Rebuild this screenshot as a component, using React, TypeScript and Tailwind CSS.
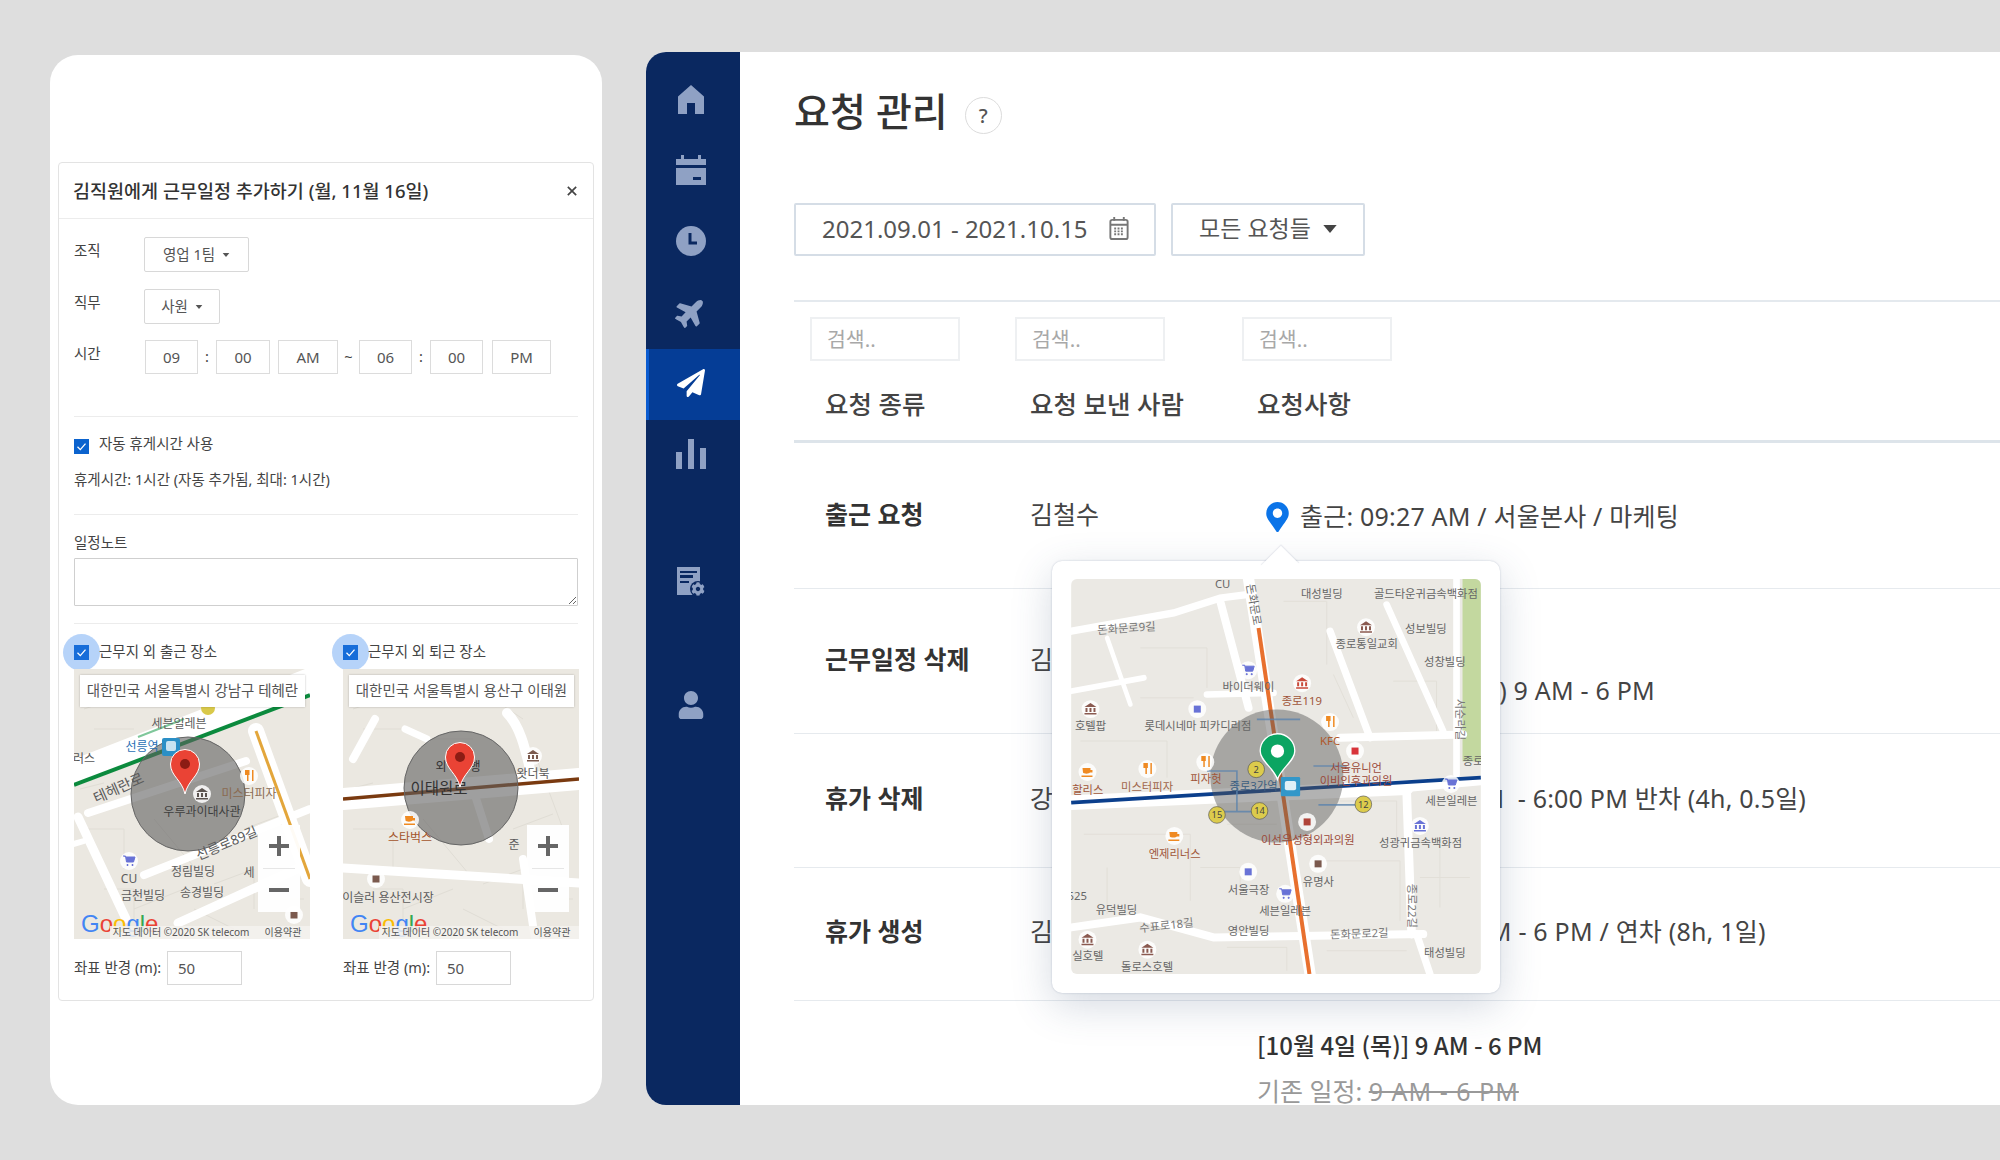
import { FaPaperPlane, FaPlane, FaUser, FaCog, FaMapMarkerAlt } from "react-icons/fa";

const FONT = { fontFamily: '"Noto Sans", "Noto Sans CJK KR", sans-serif' };
const CJK_FIRST = { fontFamily: '"Noto Sans CJK KR", "Noto Sans", sans-serif' };

function Caret({ className = "" }: { className?: string }) {
  return (
    <svg viewBox="0 0 10 6" className={className} fill="currentColor">
      <path d="M0 0h10L5 6z" />
    </svg>
  );
}

function Check() {
  return (
    <svg viewBox="0 0 15 15" className="h-[15px] w-[15px]" fill="none" stroke="white" strokeWidth="1.3">
      <path d="M3.5 7.8l2.8 2.8 5.2-6" />
    </svg>
  );
}

function Checkbox({ halo }: { halo?: boolean }) {
  return (
    <span className="relative block h-[15px] w-[15px] shrink-0 bg-[#0b63ce]">
      {halo && <span className="absolute -left-[11px] -top-[11px] h-[37px] w-[37px] rounded-full bg-[#2f80ed]/35" />}
      <span className="absolute inset-0">
        <Check />
      </span>
    </span>
  );
}

function Field({ w, value }: { w: string; value: string }) {
  return <div className={`${w} flex h-[34px] items-center justify-center border border-[#dcdcdc] text-[15px] text-[#555]`}>{value}</div>;
}

function DropButton({ w, label }: { w: string; label: string }) {
  return (
    <div className={`${w} flex h-[35px] items-center justify-center gap-[7px] rounded-[2px] border border-[#d8d8d8] text-[14.5px] text-[#555]`}>
      {label}
      <Caret className="h-[4px] w-[8px] text-[#555]" />
    </div>
  );
}

function Pin({ x, y, fill, dot, s = 1 }: { x: number; y: number; fill: string; dot: string; s?: number }) {
  return (
    <g transform={`translate(${x} ${y}) scale(${s})`}>
      <path d="M0 0C-3-14-14.5-18-14.5-30A14.5 14.5 0 0 1 14.5-30C14.5-18 3-14 0 0Z" fill={fill} stroke="#fff" strokeWidth="1" />
      <circle cx="0" cy="-30" r="5" fill={dot} />
    </g>
  );
}

function Poi({ x, y, color, kind }: { x: number; y: number; color: string; kind: "cart" | "fork" | "square" | "bank" | "cup" }) {
  return (
    <g transform={`translate(${x} ${y})`}>
      <circle r="9" fill="#fff" opacity="0.85" />
      {kind === "square" && <rect x="-3.5" y="-3.5" width="7" height="7" fill={color} />}
      {kind === "fork" && <path d="M-4-6v5h2v6h1.5v-6h1V-6M3-6v11h1.5V-6z" fill={color} />}
      {kind === "cart" && <path d="M-6-5h2.5l1 6h7l1.5-5h-9M-2 3.5h1v1h-1zM3 3.5h1v1h-1z" fill={color} stroke={color} />}
      {kind === "bank" && <path d="M-6-2L0-6l6 4zM-5-1h2v4h-2zM-1-1h2v4h-2zM3-1h2v4h-2zM-6 4h12v1.5h-12z" fill={color} />}
      {kind === "cup" && <path d="M-5-4h8v2h2v2.5h-2.6C2 2-4 2-4.5 0.5zM-6 3.5H5V5H-6z" fill={color} />}
    </g>
  );
}

const ROAD = { fill: "none", stroke: "#fff", strokeLinecap: "round" as const };

function Attribution({ x }: { x: number }) {
  return (
    <g>
      <text x="7" y="263" fontSize="24" fontFamily="Liberation Sans, sans-serif">
        <tspan fill="#4285f4">G</tspan>
        <tspan fill="#ea4335">o</tspan>
        <tspan fill="#fbbc05">o</tspan>
        <tspan fill="#4285f4">g</tspan>
        <tspan fill="#34a853">l</tspan>
        <tspan fill="#ea4335">e</tspan>
      </text>
      <rect x="36" y="257" width="200" height="13" fill="#f4f2ee" opacity="0.85" />
      <text x={x} y="267" fontSize="10" fill="#555" textAnchor="middle">지도 데이터 ©2020 SK telecom</text>
      <text x="209" y="267" fontSize="10" fill="#555" textAnchor="middle">이용약관</text>
    </g>
  );
}

function Texture() {
  return (
    <g fill="none" stroke="#e0ddd5" strokeWidth="1">
      <path d="M10 160h40v40M30 220h30v30M80 150l50 60M140 215l40-15v40M170 160l40-15M190 80l30 80M20 60h40M10 40l30-10M60 240l50-20" />
      <path d="M150 30l30 20M200 230h30M90 70h40M120 240l40 20M6 120l24-6" />
    </g>
  );
}

function LeftMap() {
  return (
    <svg viewBox="0 0 236 270" className="h-full w-full" style={FONT}>
      <rect width="236" height="270" fill="#ebe8e1" />
      <Texture />
      <g {...ROAD}>
        <path d="M0 104L236 12" strokeWidth="26" />
        <path d="M182 62L236 210" strokeWidth="16" />
        <path d="M4 148L52 250" strokeWidth="9" />
        <path d="M14 144L172 92" strokeWidth="8" />
        <path d="M70 206L236 140" strokeWidth="8" />
        <path d="M104 254L236 194" strokeWidth="9" />
        <path d="M0 175L10 172" strokeWidth="6" />
      </g>
      <path d="M0 116L236 26" stroke="#0b8a3d" strokeWidth="4" />
      <path d="M64 68L110 50" stroke="#7fc79a" strokeWidth="2" />
      <path d="M182 62L236 210" stroke="#e3a63b" strokeWidth="3" />
      <circle cx="114" cy="125" r="57" fill="#5f5f5f" fillOpacity="0.6" stroke="#666" strokeWidth="1" />
      <g fontSize="12" fill="#5b5b5b" textAnchor="middle">
        <text x="105" y="59">세븐일레븐</text>
        <text x="68" y="82" fill="#2a6fb5">선릉역</text>
        <text x="10" y="94" fill="#555">러스</text>
        <text x="45" y="124" fontSize="14.5" transform="rotate(-24 45 120)">테헤란로</text>
        <text x="128" y="147" fill="#3e3e3e">우루과이대사관</text>
        <text x="175" y="129" fill="#8a6a50">미스터피자</text>
        <text x="153" y="179" fontSize="13.5" transform="rotate(-23 153 175)">선릉로89길</text>
        <text x="119" y="207">정림빌딩</text>
        <text x="175" y="208">세</text>
        <text x="55" y="214">CU</text>
        <text x="69" y="231">금천빌딩</text>
        <text x="128" y="228">송경빌딩</text>
      </g>
      <rect x="88" y="69" width="18" height="18" rx="2" fill="#2b8fc6" />
      <rect x="92" y="72" width="10" height="10" rx="2" fill="#fff" opacity="0.75" />
      <circle cx="134" cy="39" r="7" fill="#d9c94a" />
      <Poi x={55} y={192} color="#6872d6" kind="cart" />
      <Poi x={175} y={107} color="#ef8a22" kind="fork" />
      <Poi x={128} y={125} color="#5c5450" kind="bank" />
      <Poi x={220} y={246} color="#7b5a4e" kind="square" />
      <Pin x={111} y={125} fill="#ea4335" dot="#8c1c14" s={1} />
      <Attribution x={107} />
    </svg>
  );
}

function RightMap() {
  return (
    <svg viewBox="0 0 236 270" className="h-full w-full" style={FONT}>
      <rect width="236" height="270" fill="#ebe8e1" />
      <Texture />
      <g {...ROAD}>
        <path d="M0 130L236 110" strokeWidth="22" />
        <path d="M0 199L236 214" strokeWidth="9" />
        <path d="M164 44C180 60 184 90 190 112" strokeWidth="10" />
        <path d="M180 190L192 270" strokeWidth="8" />
        <path d="M10 90L32 50" strokeWidth="8" />
        <path d="M62 60L84 70" strokeWidth="7" />
        <path d="M130 120L146 170" strokeWidth="8" />
      </g>
      <path d="M0 130L236 110" stroke="#7a3a10" strokeWidth="3.5" />
      <circle cx="118" cy="119" r="57" fill="#5f5f5f" fillOpacity="0.6" stroke="#666" strokeWidth="1" />
      <g fontSize="12" fill="#5b5b5b" textAnchor="middle">
        <text x="98" y="102" fill="#333">외</text>
        <text x="132" y="102" fill="#333">행</text>
        <text x="96" y="125" fontSize="15.5" fill="#333">이태원로</text>
        <text x="190" y="109">왓더북</text>
        <text x="67" y="173" fill="#a3542a">스타벅스</text>
        <text x="171" y="180">준</text>
        <text x="45" y="233">이슬러 용산전시장</text>
      </g>
      <Poi x={190} y={87} color="#7b5a4e" kind="bank" />
      <Poi x={67} y={151} color="#ef8a22" kind="cup" />
      <Poi x={33} y={210} color="#7b5a4e" kind="square" />
      <Pin x={117} y={118} fill="#ea4335" dot="#8c1c14" />
      <Attribution x={107} />
    </svg>
  );
}

function ZoomControl() {
  return (
    <div className="absolute bottom-[27px] right-[10px] flex h-[87px] w-[42px] flex-col items-center bg-white/95">
      <div className="flex h-[43px] w-full items-center justify-center">
        <svg viewBox="0 0 20 20" className="h-[20px] w-[20px]" fill="#666">
          <path d="M8 0h4v8h8v4h-8v8H8v-8H0V8h8z" />
        </svg>
      </div>
      <div className="h-px w-[32px] bg-[#e6e6e6]" />
      <div className="flex flex-1 items-center justify-center">
        <div className="h-[4px] w-[20px] bg-[#666]" />
      </div>
    </div>
  );
}

function MapBlock({ label, address, map }: { label: string; address: string; map: React.ReactNode }) {
  return (
    <div className="w-[236px]">
      <div className="flex h-[15px] items-center gap-[10px] text-[14.5px] text-[#444]">
        <Checkbox halo />
        <span className="relative">{label}</span>
      </div>
      <div className="relative mt-[9px] h-[270px] w-[236px]">
        {map}
        <div className="absolute left-[6px] top-[6px] flex h-[32px] w-[225px] items-center justify-center bg-white text-[14.5px] text-[#555] shadow-[0_0_2px_rgba(0,0,0,0.25)]">
          {address}
        </div>
        <ZoomControl />
      </div>
      <div className="mt-[12px] flex items-center gap-[6px] text-[14.5px] text-[#444]">
        <span className="w-[87px] shrink-0 whitespace-nowrap">좌표 반경 (m):</span>
        <div className="flex h-[34px] w-[75px] items-center border border-[#d8d8d8] pl-[10px] text-[15px] text-[#555]">50</div>
      </div>
    </div>
  );
}

function ScheduleDialog() {
  return (
    <div className="h-[839px] rounded-[4px] border border-[#e3e3e3] text-[#444]">
      <div className="flex h-[56px] items-center justify-between border-b border-[#ececec] pl-[14px] pr-[16px]">
        <span className="text-[18.5px] font-medium text-[#333]">김직원에게 근무일정 추가하기 (월, 11월 16일)</span>
        <svg viewBox="0 0 12 12" className="h-[10px] w-[10px]" stroke="#444" strokeWidth="2">
          <path d="M1 1l10 10M11 1L1 11" />
        </svg>
      </div>
      <div className="px-[15px] text-[14.5px]">
        <div className="mt-[18px] flex">
          <span className="w-[70px] pt-[3px]">조직</span>
          <DropButton w="w-[105px]" label="영업 1팀" />
        </div>
        <div className="mt-[17px] flex">
          <span className="w-[70px] pt-[3px]">직무</span>
          <DropButton w="w-[76px]" label="사원" />
        </div>
        <div className="mt-[16px] flex">
          <span className="w-[71px] pt-[3px]">시간</span>
          <div className="flex items-center">
            <Field w="w-[53px]" value="09" />
            <span className="w-[18px] text-center">:</span>
            <Field w="w-[54px]" value="00" />
            <div className="w-[8px]" />
            <Field w="w-[60px]" value="AM" />
            <span className="w-[21px] text-center">~</span>
            <Field w="w-[53px]" value="06" />
            <span className="w-[18px] text-center">:</span>
            <Field w="w-[53px]" value="00" />
            <div className="w-[9px]" />
            <Field w="w-[59px]" value="PM" />
          </div>
        </div>
        <div className="mt-[42px] h-px bg-[#ececec]" />
        <div className="mt-[22px] flex items-start gap-[10px]">
          <Checkbox />
          <span className="-mt-[6px]">자동 휴게시간 사용</span>
        </div>
        <div className="mt-[12px] leading-[24px]">휴게시간: 1시간 (자동 추가됨, 최대: 1시간)</div>
        <div className="mt-[23px] h-px bg-[#ececec]" />
        <div className="mt-[15px] leading-[24px]">일정노트</div>
        <textarea readOnly className="mt-[4px] block h-[48px] w-full rounded-[1px] border border-[#cfcfcf]" />
        <div className="mt-[17px] h-px bg-[#ececec]" />
        <div className="mt-[21px] flex gap-[33px]">
          <MapBlock label="근무지 외 출근 장소" address="대한민국 서울특별시 강남구 테헤란" map={<LeftMap />} />
          <MapBlock label="근무지 외 퇴근 장소" address="대한민국 서울특별시 용산구 이태원" map={<RightMap />} />
        </div>
      </div>
    </div>
  );
}

function SideIcon({ children, active }: { children: React.ReactNode; active?: boolean }) {
  return (
    <div className={`flex h-[71px] items-center justify-center pb-[3px] ${active ? "border-l-[3px] border-[#0a5bd0] bg-[#053d96] pr-[7px] text-white" : "pr-[4px] text-[#8fa1c4]"}`}>
      {children}
    </div>
  );
}

function Sidebar() {
  return (
    <div className="flex w-[94px] shrink-0 flex-col bg-[#0a2860] pt-[13px] text-[#8fa1c4]">
      <SideIcon>
        <svg viewBox="0 0 30 29" className="h-[29px] w-[30px]" fill="currentColor">
          <path d="M15 0l13 11.500V29h-9V18h-8v11H2V11.500z" />
        </svg>
      </SideIcon>
      <SideIcon>
        <svg viewBox="0 0 30 30" className="h-[30px] w-[30px]" fill="currentColor">
          <path d="M5 0h3v4h14V0h3v4h5v6H0V4h5zM0 13h30v17H0zM17 22v3h8v-3z" fillRule="evenodd" />
        </svg>
      </SideIcon>
      <SideIcon>
        <svg viewBox="0 0 30 30" className="h-[30px] w-[30px]">
          <circle cx="15" cy="15" r="15" fill="currentColor" />
          <path d="M14 7v10h7" fill="none" stroke="#0a2860" strokeWidth="3" />
        </svg>
      </SideIcon>
      <SideIcon>
        <FaPlane className="h-[32px] w-[32px] -rotate-45" />
      </SideIcon>
      <SideIcon active>
        <FaPaperPlane className="h-[28px] w-[28px]" />
      </SideIcon>
      <SideIcon>
        <svg viewBox="0 0 30 30" className="h-[30px] w-[30px]" fill="currentColor">
          <path d="M0 13h6v17H0zM12 0h6v30h-6zM24 9h6v21h-6z" />
        </svg>
      </SideIcon>
      <div className="mt-[76px] flex h-[30px] justify-center pr-[4px]">
        <div className="relative h-[28px] w-[28px]">
          <svg viewBox="0 0 24 28" className="h-[28px] w-[24px]" fill="currentColor">
            <path fillRule="evenodd" d="M0 0h23v28H0zM3 4v7h13V8h-13V6h17V4zM3 14v2h9v-2z" />
          </svg>
          <FaCog className="absolute -right-[1px] bottom-[-2px] h-[16px] w-[16px] rounded-full bg-[#0a2860] p-[1px]" />
        </div>
      </div>
      <div className="mt-[94px] flex justify-center pr-[4px]">
        <FaUser className="h-[28px] w-[28px]" />
      </div>
    </div>
  );
}

function SmallLabel({ x, y, t, c = "#666", r }: { x: number; y: number; t: string; c?: string; r?: number }) {
  return (
    <text x={x} y={y + 11} fill={c} textAnchor="middle" transform={r ? `rotate(${r} ${x} ${y})` : undefined}>
      {t}
    </text>
  );
}

function PopoverMap() {
  const labels: [number, number, string, string?, number?][] = [
    [547, 130, "CU"], [845, 160, "대성빌딩"], [1158, 160, "골드타운귀금속백화점"], [1158, 265, "성보빌딩"],
    [980, 310, "종로통일교회"], [1215, 362, "성창빌딩"], [258, 262, "돈화문로9길", "#777", -4], [625, 438, "바이더웨이"],
    [785, 482, "종로119", "#a0563a"], [150, 556, "호텔팝"], [473, 556, "롯데시네마 피카디리점"], [870, 600, "KFC", "#b0582a"],
    [948, 683, "서울유니언", "#9b4a3a"], [948, 720, "이비인후과의원", "#9b4a3a"], [320, 738, "미스터피자", "#a0664a"], [497, 715, "피자헛", "#a0563a"],
    [142, 748, "할리스", "#a0563a"], [640, 735, "종로3가역", "#3d5f80"], [1235, 780, "세븐일레븐"], [803, 898, "이선우성형외과의원", "#9b4a3a"],
    [1142, 908, "성광귀금속백화점"], [403, 940, "엔제리너스", "#a0563a"], [625, 1048, "서울극장"], [835, 1025, "유명사"],
    [110, 1068, "525"], [228, 1108, "유덕빌딩"], [735, 1112, "세븐일레븐"], [378, 1155, "수표로18길", "#777", -6],
    [625, 1172, "영안빌딩"], [958, 1180, "돈화문로2길", "#777", -2], [1215, 1238, "태성빌딩"], [142, 1248, "실호텔"],
    [320, 1280, "돌로스호텔"], [1258, 535, "서순라길", "#777", 90], [1115, 1095, "종로22길", "#777", 90], [1300, 662, "종로"],
    [640, 190, "돈화문로", "#666", 80],
  ];
  return (
    <svg viewBox="92 113 1231 1187" className="block h-full w-full rounded-[6px]" style={FONT}>
      <rect x="92" y="113" width="1231" height="1187" fill="#ebe9e4" />
      <rect x="1268" y="113" width="55" height="548" fill="#c3d89f" />
      <g fill="none" stroke="#e2dfd8" strokeWidth="3">
        <path d="M120 600h260v110M130 880h320v200M900 780h170v120M850 960h230v180M300 320h200v120M730 180h130v190M1060 420h130v150M200 980v140M480 980h120v60M880 400l60 130" />
        <path d="M560 850h150M560 1220h180v70M860 1230h240M1200 900v200M1140 1010h150M300 470h160" />
      </g>
      <g {...ROAD}>
        <path d="M92 785L1100 740" strokeWidth="44" />
        <path d="M1100 740L1323 720" strokeWidth="26" />
        <path d="M625 113L810 1300" strokeWidth="34" />
        <path d="M92 270L400 215L540 170L620 160" strokeWidth="22" />
        <path d="M540 180L625 500" strokeWidth="24" />
        <path d="M200 290L270 490" strokeWidth="14" />
        <path d="M92 450L310 410" strokeWidth="18" />
        <path d="M500 460L700 455" strokeWidth="20" />
        <path d="M870 270L990 590" strokeWidth="22" />
        <path d="M900 590L1270 580" strokeWidth="24" />
        <path d="M1040 190L1210 570" strokeWidth="20" />
        <path d="M1250 113V700" strokeWidth="20" />
        <path d="M1100 745L1115 1180" strokeWidth="26" />
        <path d="M92 1160L300 1130L520 1190L1150 1180" strokeWidth="24" />
        <path d="M1130 1180L1170 1300" strokeWidth="22" />
      </g>
      <path d="M92 785L1323 710" stroke="#0b3f8c" strokeWidth="11" />
      <path d="M655 260L808 1300" stroke="#e8702e" strokeWidth="12" />
      <circle cx="710" cy="705" r="200" fill="#555" fillOpacity="0.45" />
      <path d="M500 690h90v120M590 812h-60M590 812h70M820 675h100M835 792h120M650 535h130" stroke="#5b83ad" strokeWidth="5" fill="none" opacity="0.8" />
      <g fontSize="34" fill="#666">
        {labels.map(([x, y, t, c, r]) => (
          <SmallLabel key={`${x}-${y}`} x={x} y={y} t={t} c={c} r={r} />
        ))}
      </g>
      <g transform="scale(3)">
        <Poi x={50} y={168} color="#8a5a50" kind="bank" />
        <Poi x={157} y={168} color="#6872d6" kind="square" />
        <Poi x={47} y={231} color="#ef8a22" kind="cup" />
        <Poi x={107} y={228} color="#ef8a22" kind="fork" />
        <Poi x={165} y={221} color="#ef8a22" kind="fork" />
        <Poi x={208} y={129} color="#6872d6" kind="cart" />
        <Poi x={262} y={142} color="#c94a3a" kind="bank" />
        <Poi x={290} y={181} color="#ef8a22" kind="fork" />
        <Poi x={315} y={210} color="#d8343a" kind="square" />
        <Poi x={267} y={281} color="#b0443a" kind="square" />
        <Poi x={134} y={295} color="#ef8a22" kind="cup" />
        <Poi x={380} y={285} color="#6872d6" kind="bank" />
        <Poi x={411} y={243} color="#6872d6" kind="cart" />
        <Poi x={208} y={331} color="#6872d6" kind="square" />
        <Poi x={278} y={323} color="#7b5a4e" kind="square" />
        <Poi x={245} y={353} color="#6872d6" kind="cart" />
        <Poi x={47} y={399} color="#8a5a50" kind="bank" />
        <Poi x={107} y={409} color="#8a5a50" kind="bank" />
        <Poi x={326} y={86} color="#8a5a50" kind="bank" />
      </g>
      <rect x="722" y="708" width="58" height="58" rx="4" fill="#3397c9" />
      <rect x="734" y="720" width="34" height="28" rx="6" fill="#fff" opacity="0.85" />
      <g fontSize="28" textAnchor="middle" fill="#444" stroke="#555" strokeWidth="2">
        {[[648, 685, "2"], [970, 790, "12"], [658, 810, "14"], [530, 822, "15"]].map(([x, y, n]) => (
          <g key={String(n)}>
            <circle cx={x as number} cy={y as number} r="25" fill="#dccb4c" />
            <text x={x as number} y={(y as number) + 10} strokeWidth="0">{n}</text>
          </g>
        ))}
      </g>
      <path d="M712 715C700 680 660 660 660 630A52 52 0 0 1 764 630C764 660 724 680 712 715Z" fill="#0ba562" stroke="#fff" strokeWidth="4" />
      <circle cx="712" cy="630" r="20" fill="#fff" />
    </svg>
  );
}

function RequestRow({ name, who, detail, className = "", detailClass = "" }: { name?: string; who?: string; detail: React.ReactNode; className?: string; detailClass?: string }) {
  return (
    <div className={`grid grid-cols-[205px_227px_1fr] items-center border-b border-[#e6eaee] pl-[31px] ${className}`}>
      <div className="text-[25px] font-semibold text-[#333]">{name}</div>
      <div className="text-[25px] text-[#444]">{who}</div>
      <div className={`whitespace-nowrap text-[25px] tracking-[0.2px] text-[#444] ${detailClass}`}>{detail}</div>
    </div>
  );
}

function RequestsPanel() {
  return (
    <div className="relative min-w-0 flex-1 pl-[54px] pt-[29px]">
      <div className="flex h-[60px] items-center">
        <h1 className="text-[39px] font-medium text-[#333]">요청 관리</h1>
        <div className="ml-[17px] mt-[9px] flex h-[37px] w-[37px] items-center justify-center rounded-full border border-[#dcdcdc] text-[20px] font-medium text-[#555]">?</div>
      </div>
      <div className="mt-[62px] flex h-[53px] gap-[15px] text-[24px] text-[#555]">
        <div className="flex w-[362px] items-center justify-between rounded-[2px] border-2 border-[#d5dde6] pb-[2px] pl-[26px] pr-[25px]">
          <span>2021.09.01 - 2021.10.15</span>
          <svg viewBox="0 0 20 24" className="h-[23px] w-[20px]" fill="none" stroke="#777" strokeWidth="2">
            <rect x="1" y="3" width="18" height="20" rx="2" />
            <path d="M1 8h18M5 0v4M15 0v4" />
            <path d="M5 12h10M5 15h10M5 18h10" strokeDasharray="2 1.5" />
          </svg>
        </div>
        <div className="flex w-[194px] items-center justify-center gap-[12px] rounded-[2px] border-2 border-[#d5dde6] pb-[2px] text-[23px]">
          <span>모든 요청들</span>
          <Caret className="h-[8px] w-[14px] text-[#444]" />
        </div>
      </div>
      <div className="mt-[44px] h-[2px] bg-[#e4e9ee]" />
      <div className="mt-[15px] grid grid-cols-[205px_227px_1fr] pl-[16px]">
        {[0, 1, 2].map((i) => (
          <div key={i} className="flex h-[44px] w-[150px] items-center border-2 border-[#eef0f2] pl-[15px] text-[20.5px] text-[#a8a8a8]">검색..</div>
        ))}
      </div>
      <div className="grid h-[82px] grid-cols-[205px_227px_1fr] items-center border-b-[3px] border-[#dde4ea] pb-[2px] pl-[31px] pt-[9px] text-[25.5px] font-medium text-[#444]">
        <span>요청 종류</span>
        <span>요청 보낸 사람</span>
        <span>요청사항</span>
      </div>
      <RequestRow
        className="h-[146px] pb-[1px]"
        name="출근 요청"
        who="김철수"
        detail={
          <span className="flex items-center gap-[11px] pl-[9px] pt-[3px]">
            <FaMapMarkerAlt className="h-[30px] w-[23px] text-[#0b74e8]" />
            출근: 09:27 AM / 서울본사 / 마케팅
          </span>
        }
      />
      <RequestRow
        className="h-[145px] pb-[3px]"
        name="근무일정 삭제"
        who="김민수"
        detailClass="pt-[15px] leading-[46px]"
        detail={
          <>
            <div>[10월 5일 (월)]</div>
            <div>기존일정 [10월 5일 (월) 9 AM - 6 PM</div>
          </>
        }
      />
      <RequestRow className="h-[134px] pb-[4px]" name="휴가 삭제" who="강민지" detail={"[10월6일(화)] 1:00 PM\u00a0 - 6:00 PM 반차 (4h, 0.5일)"} />
      <RequestRow className="h-[133px] pb-[4px]" name="휴가 생성" who="김영희" detail="[10월 17일 (수)] 09 AM - 6 PM / 연차 (8h, 1일)" />
      <div className="grid grid-cols-[205px_227px_1fr] pl-[31px] pt-[21px] text-[25px] leading-[46px]">
        <div />
        <div />
        <div>
          <div className="text-[24px] font-medium text-[#333]" style={CJK_FIRST}>[10월 4일 (목)] 9 AM - 6 PM</div>
          <div className="text-[#999]">
            기존 일정: <span className="tracking-[1px] line-through">9 AM - 6 PM</span>
          </div>
        </div>
      </div>
      <div className="absolute left-[312px] top-[509px] h-[432px] w-[448px] rounded-[10px] bg-white p-[18px] pb-[19px] pl-[19px] pr-[18px] shadow-[0_12px_40px_rgba(60,80,120,0.22),0_0_2px_rgba(60,80,120,0.3)]">
        <div className="absolute -top-[9px] left-[215px] h-[26px] w-[26px] rotate-45 scale-y-110 bg-white shadow-[-1px_-1px_1px_rgba(60,80,120,0.1)]" />
        <div className="relative h-[395px] w-[410px]">
          <PopoverMap />
        </div>
      </div>
    </div>
  );
}

export default function App() {
  return (
    <div className="flex h-[1160px] w-[2000px] overflow-hidden bg-[#dedede]" style={FONT}>
      <div className="ml-[50px] mt-[55px] h-[1050px] w-[552px] shrink-0 rounded-[28px] bg-white px-[8px] pt-[107px]">
        <ScheduleDialog />
      </div>
      <div className="ml-[44px] mt-[52px] flex h-[1053px] flex-1 overflow-hidden rounded-l-[20px] bg-white">
        <Sidebar />
        <RequestsPanel />
      </div>
    </div>
  );
}
